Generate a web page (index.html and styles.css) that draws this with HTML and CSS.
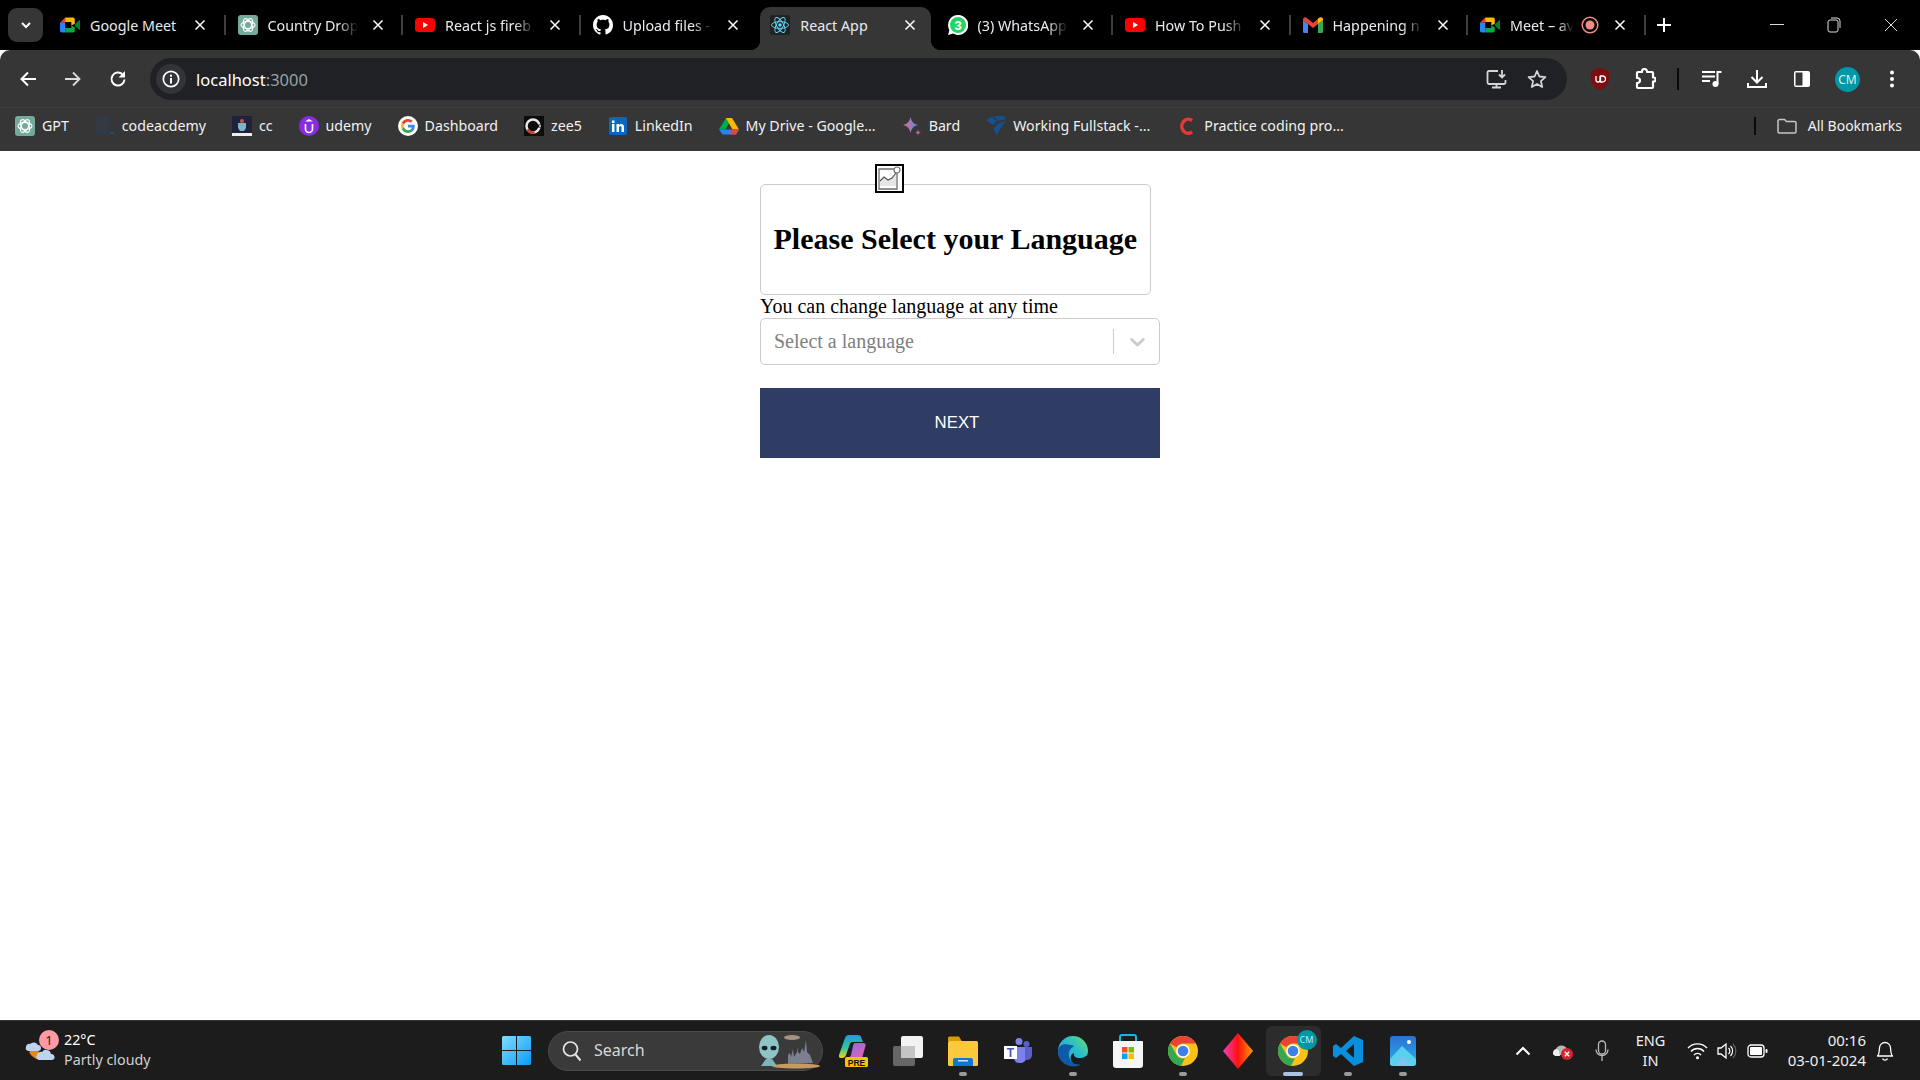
FILE: index.html
```html
<!DOCTYPE html>
<html lang="en">
<head>
<meta charset="utf-8">
<title>React App</title>
<link rel="stylesheet" href="styles.css">
</head>
<body>
<svg class="sprite" width="0" height="0" aria-hidden="true">
  <symbol id="i-close" viewBox="0 0 12 12"><path d="M1.5 1.5l9 9M10.5 1.5l-9 9" stroke="#fff" stroke-width="1.5" fill="none"/></symbol>
  <symbol id="i-meet" viewBox="0 0 23 19"><path d="M6 1L0 7h6z" fill="#ea4335"/><path d="M0 7v9a2 2 0 0 0 2 2h4V7z" fill="#2684fc"/><path d="M6 1h9a2 2 0 0 1 2 2v5l-4 2V6H6z" fill="#ffba00"/><path d="M6 13h7v-3l4 2v4a2 2 0 0 1-2 2H6z" fill="#00ac47"/><path d="M17 9l5-5q1-.5 1 .6v9.8q0 1.1-1 .6l-5-5z" fill="#00832d"/></symbol>
  <symbol id="i-gpt" viewBox="0 0 20 20"><rect width="20" height="20" rx="3" fill="#74aa9c"/><g fill="none" stroke="#fff" stroke-width="1.1"><ellipse cx="10" cy="10" rx="7" ry="3.6"/><ellipse cx="10" cy="10" rx="7" ry="3.6" transform="rotate(60 10 10)"/><ellipse cx="10" cy="10" rx="7" ry="3.6" transform="rotate(120 10 10)"/></g></symbol>
  <symbol id="i-yt" viewBox="0 0 20 14"><rect width="20" height="14" rx="3.5" fill="#f00"/><path d="M8 4l5 3-5 3z" fill="#fff"/></symbol>
  <symbol id="i-chrome" viewBox="0 0 48 48"><circle cx="24" cy="24" r="24" fill="#fbc116"/><path d="M24 0a24 24 0 0 1 20.8 12H24a12 12 0 0 0-10.4 6L3.2 12A24 24 0 0 1 24 0z" fill="#ea4335"/><path d="M3.2 12l10.4 18a12 12 0 0 0 13.5 5.6L20.7 47.8A24 24 0 0 1 3.2 12z" fill="#34a853"/><circle cx="24" cy="24" r="11" fill="#fff"/><circle cx="24" cy="24" r="8.5" fill="#3f7fe8"/></symbol>
  <symbol id="i-g" viewBox="0 0 48 48"><path fill="#EA4335" d="M24 9.5c3.54 0 6.71 1.22 9.21 3.6l6.85-6.85C35.9 2.38 30.47 0 24 0 14.62 0 6.51 5.38 2.56 13.22l7.98 6.19C12.43 13.72 17.74 9.5 24 9.5z"/><path fill="#4285F4" d="M46.98 24.55c0-1.57-.15-3.09-.38-4.55H24v9.02h12.94c-.58 2.96-2.26 5.48-4.78 7.18l7.73 6c4.51-4.18 7.09-10.36 7.09-17.65z"/><path fill="#FBBC05" d="M10.53 28.59c-.48-1.45-.76-2.99-.76-4.59s.27-3.14.76-4.59l-7.98-6.19C.92 16.46 0 20.12 0 24c0 3.88.92 7.54 2.56 10.78l7.97-6.19z"/><path fill="#34A853" d="M24 48c6.48 0 11.93-2.13 16.03-5.81l-7.73-6c-2.15 1.45-4.92 2.3-8.3 2.3-6.26 0-11.57-4.22-13.47-9.91l-7.98 6.19C6.51 42.62 14.62 48 24 48z"/></symbol>
</svg>

<header class="tabstrip">
  <button class="tabsearch"><svg width="12" height="8" viewBox="0 0 12 8"><path d="M2 2l4 4 4-4" fill="none" stroke="#fff" stroke-width="2"/></svg></button>
  <div class="tab"><svg class="favicon"><use href="#i-meet"/></svg><span class="tab-title">Google Meet</span><svg class="tab-close"><use href="#i-close"/></svg><i class="tab-sep"></i></div>
  <div class="tab"><svg class="favicon"><use href="#i-gpt"/></svg><span class="tab-title fade">Country Drop</span><svg class="tab-close"><use href="#i-close"/></svg><i class="tab-sep"></i></div>
  <div class="tab"><svg class="favicon"><use href="#i-yt"/></svg><span class="tab-title fade">React js fireb</span><svg class="tab-close"><use href="#i-close"/></svg><i class="tab-sep"></i></div>
  <div class="tab"><svg class="favicon" viewBox="0 0 16 16"><path fill="#fff" d="M8 0C3.58 0 0 3.58 0 8c0 3.54 2.29 6.53 5.47 7.59.4.07.55-.17.55-.38 0-.19-.01-.82-.01-1.49-2.01.37-2.53-.49-2.69-.94-.09-.23-.48-.94-.82-1.13-.28-.15-.68-.52-.01-.53.63-.01 1.08.58 1.23.82.72 1.21 1.87.87 2.33.66.07-.52.28-.87.51-1.07-1.78-.2-3.64-.89-3.64-3.95 0-.87.31-1.59.82-2.15-.08-.2-.36-1.02.08-2.12 0 0 .67-.21 2.2.82.64-.18 1.32-.27 2-.27.68 0 1.36.09 2 .27 1.53-1.04 2.2-.82 2.2-.82.44 1.1.16 1.92.08 2.12.51.56.82 1.27.82 2.15 0 3.07-1.87 3.75-3.65 3.95.29.25.54.73.54 1.48 0 1.07-.01 1.93-.01 2.2 0 .21.15.46.55.38A8.013 8.013 0 0016 8c0-4.42-3.58-8-8-8z"/></svg><span class="tab-title fade">Upload files -</span><svg class="tab-close"><use href="#i-close"/></svg></div>
  <div class="tab active"><svg class="favicon" viewBox="0 0 20 20"><rect width="20" height="20" rx="2" fill="#222"/><g fill="none" stroke="#61dafb" stroke-width=".9"><ellipse cx="10" cy="10" rx="8.5" ry="3.4"/><ellipse cx="10" cy="10" rx="8.5" ry="3.4" transform="rotate(60 10 10)"/><ellipse cx="10" cy="10" rx="8.5" ry="3.4" transform="rotate(120 10 10)"/></g><circle cx="10" cy="10" r="1.7" fill="#61dafb"/></svg><span class="tab-title">React App</span><svg class="tab-close"><use href="#i-close"/></svg></div>
  <div class="tab"><svg class="favicon" viewBox="0 0 20 20"><path d="M10 0a10 10 0 0 0-8.6 15L0 20l5.2-1.4A10 10 0 1 0 10 0z" fill="#fff"/><circle cx="10" cy="10" r="8" fill="#25d366"/><text x="10" y="14.5" class="wa-count">3</text></svg><span class="tab-title fade">(3) WhatsApp</span><svg class="tab-close"><use href="#i-close"/></svg><i class="tab-sep"></i></div>
  <div class="tab"><svg class="favicon"><use href="#i-yt"/></svg><span class="tab-title fade">How To Push</span><svg class="tab-close"><use href="#i-close"/></svg><i class="tab-sep"></i></div>
  <div class="tab"><svg class="favicon" viewBox="0 0 20 16"><path d="M0 3v11.5A1.5 1.5 0 0 0 1.5 16H5V7z" fill="#4285f4"/><path d="M15 7v9h3.500a1.500 1.500 0 0 0 1.500-1.500V3z" fill="#34a853"/><path d="M0 2.500C0 .5 2 -.5 3.500 .7L10 6 16.500 .7C18 -.5 20 .5 20 2.500V3L15 7 10 11 5 7 0 3z" fill="#ea4335"/><path d="M15 1.500L16.500 .7C18 -.5 20 .5 20 2.500V3L15 7z" fill="#fbbc04"/></svg><span class="tab-title fade">Happening n</span><svg class="tab-close"><use href="#i-close"/></svg><i class="tab-sep"></i></div>
  <div class="tab"><svg class="favicon"><use href="#i-meet"/></svg><span class="tab-title short fade">Meet – av</span><svg class="tab-rec" viewBox="0 0 18 18"><circle cx="9" cy="9" r="7.800" fill="none" stroke="#f28b82" stroke-width="1.500"/><circle cx="9" cy="9" r="4.500" fill="#f28b82"/></svg><svg class="tab-close"><use href="#i-close"/></svg><i class="tab-sep"></i></div>
  <div class="newtab"><svg width="14" height="14" viewBox="0 0 14 14"><path d="M7 0v14M0 7h14" stroke="#fff" stroke-width="2"/></svg></div>
  <div class="winctl first"><svg width="14" height="2"><rect width="14" height="1" fill="#ddd"/></svg></div>
  <div class="winctl"><svg width="14" height="16" viewBox="0 0 14 16"><rect x="1" y="3" width="10" height="12" rx="2" fill="none" stroke="#ddd"/><path d="M4 1h6a3 3 0 0 1 3 3v7" fill="none" stroke="#ddd"/></svg></div>
  <div class="winctl"><svg width="14" height="14" viewBox="0 0 14 14"><path d="M1 1l12 12M13 1L1 13" stroke="#ddd" stroke-width="1"/></svg></div>
</header>

<div class="toolbar">
  <div class="tb-btn"><svg width="18" height="18" viewBox="0 0 18 18"><path d="M17 9H3M9 2.500L2.500 9 9 15.500" fill="none" stroke="#fff" stroke-width="2"/></svg></div>
  <div class="tb-btn"><svg width="18" height="18" viewBox="0 0 18 18"><path d="M1 9h14M9 2.500L15.500 9 9 15.500" fill="none" stroke="#ddd" stroke-width="1.800"/></svg></div>
  <div class="tb-btn"><svg width="18" height="18" viewBox="0 0 18 18"><path d="M15.500 9.500A6.500 6.500 0 1 1 13.500 4.300" fill="none" stroke="#fff" stroke-width="2"/><path d="M16 1v6.500H9.500z" fill="#fff"/></svg></div>
  <div class="omnibox">
    <div class="site-info"><svg width="18" height="18" viewBox="0 0 18 18"><circle cx="9" cy="9" r="7.700" fill="none" stroke="#fff" stroke-width="1.700"/><rect x="8" y="8" width="2" height="5.500" fill="#fff"/><rect x="8" y="4.700" width="2" height="2" fill="#fff"/></svg></div>
    <div class="url">localhost<span class="url-port">:3000</span></div>
    <div class="omni-btn push"><svg width="22" height="20" viewBox="0 0 22 20"><path d="M12 2H3a1.500 1.500 0 0 0-1.500 1.500v10A1.500 1.500 0 0 0 3 15h15a1.500 1.500 0 0 0 1.500-1.500V11M6 18.500h9M10.500 15v3.500" fill="none" stroke="#d5d5d5" stroke-width="1.800"/><path d="M16 1v7M13 5.500L16 8.500l3-3" fill="none" stroke="#d5d5d5" stroke-width="1.800"/></svg></div>
    <div class="omni-btn"><svg width="20" height="20" viewBox="0 0 20 20"><path d="M10 2l2.400 5.500 6 .6-4.500 4 1.300 5.900L10 15l-5.200 3 1.300-5.900-4.500-4 6-.6z" fill="none" stroke="#d5d5d5" stroke-width="1.800" stroke-linejoin="round"/></svg></div>
  </div>
  <div class="tb-btn ublock"><svg width="18" height="22" viewBox="0 0 18 22"><path d="M9 0l9 3v8c0 5-4 9-9 11-5-2-9-6-9-11V3z" fill="#7f0d0f"/><path d="M5 8v4a2 2 0 0 0 4 0V8M9.500 8h2a2.500 2.500 0 0 1 0 6h-2z" fill="none" stroke="#fff" stroke-width="1.300"/></svg></div>
  <div class="tb-btn"><svg width="22" height="22" viewBox="0 0 22 22"><path d="M8 4V3.500a2.500 2.500 0 0 1 5 0V4h5a1 1 0 0 1 1 1v4.500h.5a2 2 0 0 1 0 4H19V19a1 1 0 0 1-1 1H4a1 1 0 0 1-1-1v-4h.5a2.500 2.500 0 0 0 0-5H3V5a1 1 0 0 1 1-1z" fill="none" stroke="#fff" stroke-width="2.200" stroke-linejoin="round"/></svg></div>
  <i class="tb-sep"></i>
  <div class="tb-btn"><svg width="20" height="18" viewBox="0 0 20 18"><path d="M0 2h13M0 6.500h13M0 11h8" stroke="#fff" stroke-width="2"/><path d="M15.500 2h4M15.500 1v13" stroke="#fff" stroke-width="2"/><circle cx="13.500" cy="14" r="3" fill="#fff"/></svg></div>
  <div class="tb-btn"><svg width="20" height="20" viewBox="0 0 20 20"><path d="M10 1v12M4.500 8L10 13.500 15.500 8M1 14v4h18v-4" fill="none" stroke="#fff" stroke-width="2"/></svg></div>
  <div class="tb-btn"><svg width="18" height="18" viewBox="0 0 18 18"><rect x="1" y="1" width="16" height="16" rx="2" fill="#fff"/><rect x="2.500" y="2.500" width="7" height="13" fill="#363636"/></svg></div>
  <div class="tb-btn"><span class="avatar">CM</span></div>
  <div class="tb-btn"><svg width="6" height="18" viewBox="0 0 6 18"><circle cx="3" cy="2.500" r="2" fill="#fff"/><circle cx="3" cy="9" r="2" fill="#fff"/><circle cx="3" cy="15.500" r="2" fill="#fff"/></svg></div>
</div>

<nav class="bookmarks">
  <a class="bm"><svg class="bm-ico"><use href="#i-gpt"/></svg>GPT</a>
  <a class="bm"><svg class="bm-ico" viewBox="0 0 20 20"><rect x="1" y="1" width="13" height="17" fill="#2c3b4a"/><rect x="3" y="3" width="9" height="13" fill="#363a40"/><rect x="15" y="16" width="4" height="2" fill="#1d4f6e"/></svg>codeacdemy</a>
  <a class="bm"><svg class="bm-ico" viewBox="0 0 20 20"><rect width="20" height="17" fill="#20223c"/><path d="M6 7h8v5l-2 3H8l-2-3z" fill="#7cb4c8"/><circle cx="10" cy="5" r="2" fill="#c8554a"/><rect y="17" width="20" height="3" fill="#eee"/></svg>cc</a>
  <a class="bm"><svg class="bm-ico" viewBox="0 0 20 20"><circle cx="10" cy="10" r="10" fill="#8a2be2"/><path d="M6.500 8v5a3.500 3.500 0 0 0 7 0V8" fill="none" stroke="#fff" stroke-width="1.700"/><path d="M10 3l4 2.500h-8z" fill="#fff"/></svg>udemy</a>
  <a class="bm"><svg class="bm-ico" viewBox="0 0 20 20"><circle cx="10" cy="10" r="10" fill="#fff"/><svg x="3" y="3" width="14" height="14"><use href="#i-g"/></svg></svg>Dashboard</a>
  <a class="bm"><svg class="bm-ico" viewBox="0 0 20 20"><rect width="20" height="20" fill="#0c0c0c"/><circle cx="9" cy="10" r="6.500" fill="none" stroke="#e8e8e8" stroke-width="2.500"/><path d="M3.500 13.500a6.500 6.500 0 0 0 7 2.800" fill="none" stroke="#c9402f" stroke-width="2.500"/><rect x="10" y="8.500" width="7" height="3" fill="#0c0c0c"/><circle cx="16" cy="10" r="1.200" fill="#aaa"/></svg>zee5</a>
  <a class="bm"><svg class="bm-ico" viewBox="0 0 20 20"><rect x="1" y="1" width="18" height="18" rx="2" fill="#0a66c2"/><rect x="4" y="8" width="2.500" height="8" fill="#fff"/><rect x="4" y="4.500" width="2.500" height="2.500" fill="#fff"/><path d="M8.500 8H11v1.200c1-1.700 5-1.900 5 1.800v5h-2.500v-4.400c0-1.800-2.500-1.700-2.500 0V16H8.500z" fill="#fff"/></svg>LinkedIn</a>
  <a class="bm"><svg class="bm-ico" viewBox="0 0 20 20"><path d="M7 2h6L6.500 13.500H0z" fill="#00ac47"/><path d="M13 2l7 11.500h-6.500L7 2z" fill="#ffba00"/><path d="M6.500 13.500H20l-3 5H3.500L0 13.500z" fill="#2684fc"/><path d="M13.500 13.500H20l-3 5h-6.500z" fill="#ea4335"/></svg>My Drive - Google...</a>
  <a class="bm"><svg class="bm-ico" viewBox="0 0 20 20"><defs><linearGradient id="g-bard" x1="0" y1="0" x2="1" y2="0"><stop offset="0" stop-color="#e96b7a"/><stop offset="1" stop-color="#4a8df0"/></linearGradient></defs><path d="M8.500 1c1 4.500 3 7 7.500 8-4.500 1-6.500 3.500-7.500 8C7.500 12.500 5.500 10 1 9c4.500-1 6.500-3.500 7.500-8z" fill="url(#g-bard)"/><path d="M16 13.500c.4 1.700 1.100 2.600 2.800 3-1.700.4-2.400 1.300-2.800 3-.4-1.700-1.100-2.600-2.800-3 1.700-.4 2.400-1.300 2.800-3z" fill="#c15fa0"/></svg>Bard</a>
  <a class="bm"><svg class="bm-ico" viewBox="0 0 20 20"><path d="M0 4l6-3 5 4-4 4zM8 0h10l2 3-8 2zM13 7l7-2-6 8-3 6-4-6z" fill="#14528f"/></svg>Working Fullstack -...</a>
  <a class="bm tight"><svg class="bm-ico" viewBox="0 0 20 20"><path d="M16 4.500A6.500 7 0 1 0 16 16" fill="none" stroke="#e53935" stroke-width="3.500"/></svg>Practice coding pro...</a>
  <i class="bm-sep"></i>
  <a class="bm all"><svg class="bm-ico" viewBox="0 0 20 16"><path d="M1 3a1.500 1.500 0 0 1 1.500-1.500h5l2 2h8A1.500 1.500 0 0 1 19 5v8.500a1.500 1.500 0 0 1-1.500 1.500h-15A1.500 1.500 0 0 1 1 13.500z" fill="none" stroke="#c4c7c5" stroke-width="1.500"/></svg>All Bookmarks</a>
</nav>

<main class="page">
  <div class="form">
    <div class="title-card">
      <span class="broken-img"><svg width="25" height="25" viewBox="0 0 25 25"><path d="M18 3H2v20h18V7" fill="#fff" stroke="#6e6e6e" stroke-width="1.300"/><path d="M3 20v-6l4-3 4 3 4-2 4-4v12z" fill="#e6e6e6"/><path d="M3 15l4-4 4 3 4-2 4-5" fill="none" stroke="#555" stroke-width="1.200"/><circle cx="20" cy="4" r="3" fill="#fff" stroke="#6e6e6e" stroke-width="1.200"/></svg></span>
      <h1 class="title">Please Select your Language</h1>
    </div>
    <div class="hint">You can change language at any time</div>
    <div class="select">
      <span class="placeholder">Select a language</span>
      <i class="select-sep"></i>
      <svg class="select-arrow" width="25" height="25" viewBox="0 0 20 20"><path fill="#ccc" d="M4.516 7.548c0.436-0.446 1.043-0.481 1.576 0l3.908 3.747 3.908-3.747c0.533-0.481 1.141-0.446 1.576 0 0.436 0.445 0.408 1.197 0 1.615-0.406 0.418-4.695 4.502-4.695 4.502-0.217 0.223-0.502 0.335-0.789 0.335s-0.572-0.112-0.791-0.335c0 0-4.287-4.084-4.695-4.502s-0.436-1.170 0-1.615z"/></svg>
    </div>
    <button class="next">NEXT</button>
  </div>
</main>

<footer class="taskbar">
  <div class="weather">
    <svg class="weather-ico" width="30" height="36" viewBox="0 0 30 36"><path d="M4 19a14 14 0 0 0 22 4c-6 1-13-1-14-9z" fill="#e8871e"/><path d="M12 22a4 4 0 0 1 5-3 5 5 0 0 1 9 2 3 3 0 0 1 1 6H14a3 3 0 0 1-2-5z" fill="#bcd3f2"/><path d="M1 14a3 3 0 0 1 4-3 5 5 0 0 1 8 1 3 3 0 0 1 0 6H3a3 3 0 0 1-2-4z" fill="#bcd3f2"/></svg>
    <span class="weather-badge">1</span>
    <div class="weather-text"><div class="temp">22°C</div><div class="cond">Partly cloudy</div></div>
  </div>
  <div class="start"><svg width="29" height="29" viewBox="0 0 29 29"><defs><linearGradient id="g-win" x1="0" y1="0" x2="1" y2="1"><stop offset="0" stop-color="#7fdcff"/><stop offset="1" stop-color="#0a9cf5"/></linearGradient></defs><path fill="url(#g-win)" d="M0 1.500A1.500 1.500 0 0 1 1.500 0H14v14H0zM15 0h12.500A1.500 1.500 0 0 1 29 1.500V14H15zM0 15h14v14H1.500A1.500 1.500 0 0 1 0 27.500zM15 15h14v12.500a1.500 1.500 0 0 1-1.500 1.500H15z"/></svg></div>
  <div class="search">
    <svg width="20" height="22" viewBox="0 0 20 22"><circle cx="8.500" cy="9" r="7" fill="none" stroke="#e6e6e6" stroke-width="1.700"/><path d="M13.500 14.500l5 6" stroke="#e6e6e6" stroke-width="2"/></svg>
    <span class="search-label">Search</span>
    <svg class="search-art" width="62" height="36" viewBox="0 0 62 36"><ellipse cx="38" cy="33" rx="24" ry="2.500" fill="#c99a5b"/><path d="M30 31V22l2-2 1 4 2-8 1 8 3-5v-5l1 5 2 2 2-6 2 4 2-12 1 12 3 3 3 8z" fill="#7c7f90"/><ellipse cx="34" cy="4.500" rx="8" ry="2.500" fill="#a49480"/><ellipse cx="11" cy="14" rx="10" ry="12" fill="#8fc4c6"/><ellipse cx="6.500" cy="15" rx="3" ry="2.300" fill="#14202a"/><ellipse cx="15.500" cy="15" rx="3" ry="2.300" fill="#14202a"/><path d="M8 26h6l5 7H3z" fill="#7fb5b8"/></svg>
  </div>
  <div class="apps">
    <div class="app"><svg width="29" height="34" viewBox="0 0 29 34"><defs><linearGradient id="g-cop" x1="0" y1="0" x2="0" y2="1"><stop offset="0" stop-color="#1e9be0"/><stop offset=".55" stop-color="#2ec4a0"/><stop offset="1" stop-color="#f0d020"/></linearGradient><linearGradient id="g-cop2" x1="0" y1="0" x2="1" y2="1"><stop offset="0" stop-color="#7a6ff0"/><stop offset="1" stop-color="#f060a8"/></linearGradient></defs><path d="M16 9h8c2 0 3 1 2.500 3L23 24H8c2 0 3.500-1 4-3l2-9c.3-2 1-3 2-3z" fill="url(#g-cop2)"/><path d="M10 1h9c2 0 3 1 3.500 3L24 8H14c-2 0-3 1-3.500 3L7 21c-.5 2-2 3-4 3H2c-2 0-2.500-2-2-3L6 4c.5-2 2-3 4-3z" fill="url(#g-cop)"/><rect x="6" y="23" width="23" height="10" rx="1.500" fill="#ffc000"/><text x="17.500" y="31.500" class="pre">PRE</text></svg></div>
    <div class="app"><svg width="30" height="30" viewBox="0 0 30 30"><rect x="0" y="10" width="22" height="20" rx="2" fill="#666"/><rect x="8" y="0" width="22" height="22" rx="2" fill="#f2f2f2"/><rect x="8" y="10" width="14" height="12" fill="#c4c4c4"/></svg><i class="dot none"></i></div>
    <div class="app"><svg width="30" height="30" viewBox="0 0 30 30"><path d="M0 2a1.500 1.500 0 0 1 1.500-1.500H11l3 5H0z" fill="#d99b00"/><rect y="5" width="30" height="25" rx="1.500" fill="#fdc93c"/><path d="M5 30v-6a2 2 0 0 1 2-2h16a2 2 0 0 1 2 2v6z" fill="#0a78d4"/><rect x="10" y="24" width="10" height="1.500" fill="#cfe6f7"/></svg><i class="dot"></i></div>
    <div class="app"><svg width="28" height="28" viewBox="0 0 28 28"><circle cx="22.500" cy="7" r="3" fill="#5b5fc7"/><circle cx="15" cy="4.500" r="3.500" fill="#7b83eb"/><path d="M10 10h12v11a5 5 0 0 1-5 5h-2a5 5 0 0 1-5-5z" fill="#7b83eb"/><path d="M21 10h7v8a5 5 0 0 1-5 5h-2z" fill="#5b5fc7"/><rect y="9" width="13" height="13" fill="#fff"/><text x="6.500" y="19.500" class="teams-t">T</text></svg></div>
    <div class="app"><svg width="30" height="32" viewBox="0 0 30 32"><defs><linearGradient id="g-edge2" x1="0" y1="1" x2="1" y2="0"><stop offset="0" stop-color="#1ba1e2"/><stop offset=".6" stop-color="#2bbfc8"/><stop offset="1" stop-color="#6ee06a"/></linearGradient></defs><circle cx="15" cy="16" r="15" fill="url(#g-edge2)"/><path d="M30 17c0 6-3 10-6 12-5 2-10 0-11-4-1-3 0-6 3-7-1 3 2 5 5 5 5 0 9-2 9-6z" fill="#1c1c1c"/><path d="M11 11c-6 2-8 10-3 16 3 3 9 5 14 3-6 0-10-3-11-8-1-4 0-8 5-11-2-1-3-1-5 0z" fill="#0f4f95"/><path d="M0 16c0 8 5 13 12 15 4 1 8 0 10-1-6 0-11-3-12-8-1-4 1-8 5-11C9 8 1 8 0 16z" fill="#0e5aa8"/></svg><i class="dot"></i></div>
    <div class="app"><svg width="30" height="36" viewBox="0 0 30 36"><path d="M7 8V4a2 2 0 0 1 2-2h12a2 2 0 0 1 2 2v4" fill="none" stroke="#16b5e8" stroke-width="2"/><path d="M1 8h28a1 1 0 0 1 1 1v23a3 3 0 0 1-3 3H3a3 3 0 0 1-3-3V9a1 1 0 0 1 1-1z" fill="#f5f5f5"/><rect x="9" y="14" width="5.500" height="5.500" fill="#f25022"/><rect x="15.500" y="14" width="5.500" height="5.500" fill="#7fba00"/><rect x="9" y="20.500" width="5.500" height="5.500" fill="#00a4ef"/><rect x="15.500" y="20.500" width="5.500" height="5.500" fill="#ffb900"/></svg></div>
    <div class="app"><svg width="30" height="30"><use href="#i-chrome"/></svg><i class="dot"></i></div>
    <div class="app"><svg width="30" height="36" viewBox="0 0 30 36"><defs><linearGradient id="g-dia" x1="0" y1="0" x2="1" y2="0"><stop offset="0" stop-color="#f040c0"/><stop offset=".5" stop-color="#ff1010"/><stop offset="1" stop-color="#ffa000"/></linearGradient></defs><path d="M15 0l15 18-15 18L0 18z" fill="url(#g-dia)"/></svg></div>
    <div class="app current"><svg width="30" height="30"><use href="#i-chrome"/></svg><span class="app-badge">CM</span><i class="dot wide"></i></div>
    <div class="app"><svg width="30" height="30" viewBox="0 0 30 30"><path d="M21 0l9 4v22l-9 4L8 18l-5 4-3-2V10l3-2 5 4zM21 8l-8 7 8 7z" fill="#0a8fdc" fill-rule="evenodd"/></svg><i class="dot"></i></div>
    <div class="app"><svg width="26" height="30" viewBox="0 0 26 30"><defs><linearGradient id="g-ph" x1="0" y1="0" x2="0" y2="1"><stop offset="0" stop-color="#2f6fd6"/><stop offset="1" stop-color="#25b4e8"/></linearGradient></defs><rect width="26" height="30" rx="3" fill="url(#g-ph)"/><circle cx="19" cy="6" r="2" fill="#fff"/><path d="M0 23l12-13 14 13v4a3 3 0 0 1-3 3H3a3 3 0 0 1-3-3z" fill="#58d0ee"/><path d="M4 30l9-10 9 10z" fill="#7cc4f2"/></svg><i class="dot"></i></div>
  </div>
  <div class="tray">
    <div class="tr w36"><svg width="16" height="10" viewBox="0 0 16 10"><path d="M1.500 8.500L8 2l6.500 6.500" fill="none" stroke="#fff" stroke-width="2"/></svg></div>
    <div class="tr w44"><svg width="22" height="20" viewBox="0 0 22 20"><path d="M1 13a5 5 0 0 1 3-5 6 6 0 0 1 11 0v6H3a2 2 0 0 1-2-1z" fill="#b8b8b8"/><path d="M1 13a5 5 0 0 1 3-5 4 4 0 0 1 3 2l1 5H3z" fill="#ededed"/><circle cx="15" cy="13" r="6" fill="#d8232f"/><path d="M12.800 10.800l4.400 4.400M17.200 10.800l-4.400 4.400" stroke="#fff" stroke-width="1.400"/></svg></div>
    <div class="tr w34"><svg width="14" height="22" viewBox="0 0 14 22"><rect x="3.500" y="1" width="7" height="13" rx="3.500" fill="none" stroke="#bbb" stroke-width="1.300"/><path d="M1 9.500a6 6 0 0 0 12 0M7 15.500V21" fill="none" stroke="#bbb" stroke-width="1.300"/></svg></div>
    <div class="tr w63 lang"><div>ENG</div><div>IN</div></div>
    <div class="tr w31"><svg width="21" height="18" viewBox="0 0 21 18"><path d="M1 6a13 13 0 0 1 19 0M4 9.500a8.500 8.500 0 0 1 13 0M7 13a4.500 4.500 0 0 1 7 0" fill="none" stroke="#fff" stroke-width="1.400"/><circle cx="10.500" cy="15.700" r="1.500" fill="#fff"/></svg></div>
    <div class="tr w28"><svg width="20" height="18" viewBox="0 0 20 18"><path d="M1 6h3l5-4v14l-5-4H1z" fill="none" stroke="#fff" stroke-width="1.300"/><path d="M11.500 6a4 4 0 0 1 0 6M13.500 4a7 7 0 0 1 0 10" fill="none" stroke="#fff" stroke-width="1.200"/><path d="M16 2a10 10 0 0 1 0 14" fill="none" stroke="#666" stroke-width="1.200"/></svg></div>
    <div class="tr w33"><svg width="21" height="14" viewBox="0 0 21 14"><rect x="1" y="1" width="16" height="12" rx="3" fill="none" stroke="#fff" stroke-width="1.300"/><rect x="3" y="3" width="12" height="8" rx="1" fill="#fff"/><rect x="18.500" y="5" width="2" height="4" rx="1" fill="#fff"/></svg></div>
    <div class="clock"><div>00:16</div><div>03-01-2024</div></div>
    <div class="tr w38"><svg width="18" height="20" viewBox="0 0 18 20"><path d="M1.500 15c2-2 1.500-4 2-8a5.500 5.500 0 0 1 11 0c.5 4 0 6 2 8z" fill="none" stroke="#fff" stroke-width="1.300" stroke-linejoin="round"/><path d="M6.500 17.500a2.700 2.700 0 0 0 5 0" fill="none" stroke="#fff" stroke-width="1.300"/></svg></div>
  </div>
</footer>
</body>
</html>
```

FILE: styles.css
```css
* { box-sizing: border-box; }
html, body { margin: 0; height: 100%; }
body {
  display: flex;
  flex-direction: column;
  height: 1080px;
  overflow: hidden;
  background: #fff;
  font-family: "Noto Sans", "Open Sans", sans-serif;
  color: #fff;
}
.sprite { display: block; height: 0; }

/* Tab strip */
.tabstrip {
  display: flex;
  align-items: flex-start;
  height: 50px;
  background: #000;
  padding-left: 8px;
  flex: none;
}
.tabsearch {
  width: 35px;
  height: 34px;
  margin: 8px 4px 0 0;
  border: 0;
  padding: 0;
  border-radius: 9px;
  background: #363636;
  display: flex;
  align-items: center;
  justify-content: center;
}
.tab {
  position: relative;
  display: flex;
  align-items: center;
  width: 177.5px;
  height: 43px;
  margin-top: 7px;
  padding: 0 0 7px 13px;
  flex: none;
  font-size: 14.3px;
  color: #e8eaed;
}
.tab.active {
  background: #363636;
  border-radius: 10px 10px 0 0;
  width: 171px;
  margin: 7px 3.25px 0;
  padding-left: 10px;
}
.tab.active::before,
.tab.active::after {
  content: "";
  position: absolute;
  bottom: 0;
  width: 10px;
  height: 10px;
}
.tab.active::before { left: -10px; background: radial-gradient(circle at 0 0, transparent 10px, #363636 10.5px); }
.tab.active::after { right: -10px; background: radial-gradient(circle at 100% 0, transparent 10px, #363636 10.5px); }
.favicon { width: 20px; height: 20px; flex: none; }
.tab-title {
  width: 94px;
  margin-left: 10px;
  overflow: hidden;
  white-space: nowrap;
  flex: none;
}
.tab-title.fade { -webkit-mask-image: linear-gradient(90deg, #000 74%, transparent 96%); mask-image: linear-gradient(90deg, #000 74%, transparent 96%); }
.tab-title.short { width: 66px; }
.tab-rec { width: 18px; height: 18px; margin-left: 5px; flex: none; }
.tab-close { width: 12px; height: 12px; margin-left: 10px; flex: none; }
.tab-title.short ~ .tab-close { margin-left: 15px; }
.tab-sep {
  position: absolute;
  right: -1px;
  top: 8px;
  width: 2px;
  height: 20px;
  background: #3f3f3f;
}
.newtab {
  width: 36px;
  height: 50px;
  margin-left: 1.500px;
  display: flex;
  align-items: center;
  justify-content: center;
}
.winctl {
  width: 57px;
  height: 50px;
  display: flex;
  align-items: center;
  justify-content: center;
}
.winctl.first { margin-left: auto; }
.winctl:last-child { margin-right: 1px; }

/* Toolbar */
.toolbar {
  display: flex;
  align-items: center;
  height: 57px;
  padding: 1px 0 0 5px;
  background: #363636;
  border-radius: 10px 10px 0 0;
  flex: none;
}
.tb-btn {
  width: 45px;
  height: 42px;
  display: flex;
  align-items: center;
  justify-content: center;
  flex: none;
}
.omnibox {
  display: flex;
  align-items: center;
  width: 1417px;
  height: 42px;
  margin: 0 10px;
  padding: 0 10px 0 6px;
  background: #202124;
  border-radius: 21px;
  flex: none;
}
.site-info {
  width: 30px;
  height: 30px;
  border-radius: 50%;
  background: #333437;
  display: flex;
  align-items: center;
  justify-content: center;
}
.url { margin-left: 10px; font-size: 16.5px; color: #fff; }
.url-port { color: #9aa0a6; }
.omni-btn {
  width: 40px;
  height: 30px;
  display: flex;
  align-items: center;
  justify-content: center;
}
.omni-btn.push { margin-left: auto; }
.tb-sep {
  width: 2px;
  height: 22px;
  margin: 0 10px;
  background: #0a0a0a;
  flex: none;
}
.avatar {
  width: 25px;
  height: 25px;
  margin-left: 2px;
  border-radius: 50%;
  background: #0097a7;
  color: #d8f2f5;
  font-size: 12px;
  display: flex;
  align-items: center;
  justify-content: center;
}

/* Bookmarks */
.bookmarks {
  display: flex;
  align-items: center;
  gap: 26px;
  height: 44px;
  padding: 0 18px 8px 15px;
  background: #363636;
  border-top: 1px solid #3c3c3c;
  font-size: 14.2px;
  flex: none;
}
.bm { display: flex; align-items: center; gap: 7px; white-space: nowrap; color: #f1f1f1; }
.bm.tight { gap: 8px; }
.bm-ico { width: 20px; height: 20px; flex: none; }
.bm-sep { width: 2px; height: 18px; background: #0a0a0a; margin-left: auto; flex: none; }
.bm.all { gap: 11px; margin-left: -5px; font-size: 14px; }

/* Page */
.page {
  flex: 1;
  display: flex;
  justify-content: center;
  padding-top: 33px;
  background: #fff;
  min-height: 0;
}
.form { width: 400px; color: #000; font-family: "Liberation Serif", serif; }
.title-card {
  position: relative;
  width: fit-content;
  height: 111px;
  padding: 0 12.5px 2px;
  border: 1px solid #ccc;
  border-radius: 5px;
  display: flex;
  align-items: center;
}
.broken-img {
  position: absolute;
  left: 114px;
  top: -21px;
  width: 29px;
  height: 29px;
  border: 2px solid #000;
  background: #fff;
  display: block;
  line-height: 0;
}
.title { margin: 0; font-size: 30px; font-weight: bold; white-space: nowrap; }
.hint { height: 23px; font-size: 20px; line-height: 23px; white-space: nowrap; }
.select {
  display: flex;
  align-items: center;
  height: 47px;
  border: 1px solid #ccc;
  border-radius: 5px;
  padding-left: 13px;
}
.placeholder { flex: 1; font-size: 20px; color: #808080; }
.select-sep { width: 1px; height: 25px; background: #ccc; flex: none; }
.select-arrow { margin: 0 9.500px 0 10.500px; flex: none; }
.next {
  display: block;
  width: 400px;
  height: 70px;
  margin-top: 23px;
  padding: 0 6px 0 0;
  border: 0;
  background: #2f3c63;
  color: #fff;
  font-family: "Liberation Sans", sans-serif;
  font-size: 16.8px;
}

/* Taskbar */
.taskbar {
  display: flex;
  align-items: center;
  height: 60px;
  padding-left: 25px;
  background: #1c1c1c;
  border-top: 1px solid #333;
  flex: none;
}
.weather {
  position: relative;
  display: flex;
  align-items: center;
  width: 464px;
  flex: none;
}
.weather-ico { flex: none; }
.weather-badge {
  position: absolute;
  left: 14px;
  top: -2px;
  width: 20px;
  height: 20px;
  border-radius: 50%;
  background: #ff9aa5;
  color: #222;
  font-size: 13px;
  line-height: 20px;
  text-align: center;
}
.weather-text { margin: -2px 0 0 9px; font-size: 14.3px; line-height: 20px; }
.temp { color: #fff; }
.cond { color: #d0d0d0; }
.start { width: 55px; display: flex; justify-content: center; flex: none; }
.search {
  display: flex;
  align-items: center;
  width: 274.500px;
  height: 40px;
  margin-left: 4px;
  padding: 0 2px 0 13px;
  border-radius: 20px;
  background: #3a3a3a;
  border: 1px solid #4a4a4a;
  flex: none;
}
.search-label { margin: -2px 0 0 12px; font-size: 16px; color: #d8d8d8; }
.search-art { margin-left: auto; }
.apps { display: flex; margin-left: 3px; flex: none; }
.app {
  position: relative;
  width: 55px;
  height: 50px;
  display: flex;
  align-items: center;
  justify-content: center;
  border-radius: 6px;
}
.app.current { background: #2c2c2c; }
.dot {
  position: absolute;
  bottom: 0;
  left: 50%;
  width: 8px;
  height: 4px;
  margin-left: -4px;
  border-radius: 2px;
  background: #9a9a9a;
}
.dot.none { display: none; }
.dot.wide { width: 20px; margin-left: -10px; background: #a9c4e6; }
.app-badge {
  position: absolute;
  right: 4px;
  top: 4px;
  width: 20px;
  height: 20px;
  border-radius: 50%;
  background: #0097a7;
  color: #bfe9ee;
  font-size: 9px;
  line-height: 20px;
  text-align: center;
}
.wa-count { font: bold 13px "Liberation Sans", sans-serif; fill: #fff; text-anchor: middle; }
.pre { font: bold 8.500px "Liberation Sans", sans-serif; fill: #111; text-anchor: middle; }
.teams-t { font: bold 12px "Liberation Sans", sans-serif; fill: #4b53bc; text-anchor: middle; }
.tray { display: flex; align-items: center; margin-left: auto; padding-right: 16px; flex: none; }
.tr { display: flex; align-items: center; justify-content: center; flex: none; }
.w28 { width: 28px; }
.w31 { width: 31px; }
.w33 { width: 33px; }
.w34 { width: 34px; }
.w36 { width: 36px; }
.w38 { width: 38px; }
.w44 { width: 44px; }
.w63 { width: 63px; }
.lang { flex-direction: column; margin-top: -2px; font-size: 14.5px; line-height: 20px; color: #f0f0f0; }
.clock { width: 92px; margin-top: -2px; text-align: right; font-size: 15px; line-height: 20px; color: #f0f0f0; white-space: nowrap; }
```
